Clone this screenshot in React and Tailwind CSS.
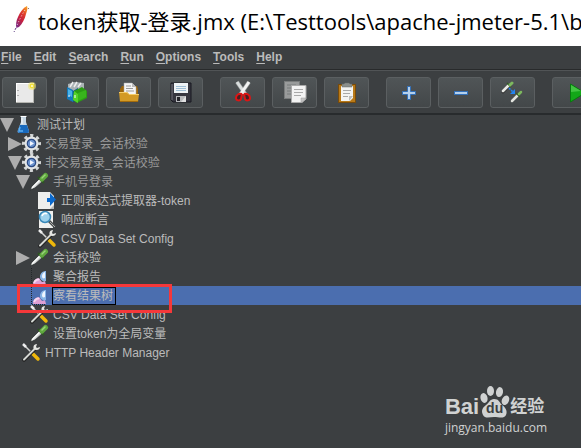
import React, { useState } from 'react';

const menus = ['File', 'Edit', 'Search', 'Run', 'Options', 'Tools', 'Help'];

const Feather = () => (
    <svg width="20" height="30" viewBox="0 0 20 30" aria-hidden="true">
        <defs>
            <linearGradient id="feather" x1="0.8" y1="0" x2="0.2" y2="1">
                <stop offset="0" stopColor="#f69923" />
                <stop offset="0.3" stopColor="#e0402c" />
                <stop offset="0.6" stopColor="#c8203c" />
                <stop offset="1" stopColor="#7b2a84" />
            </linearGradient>
        </defs>
        <path d="M15 2C11 4 8 8 6 13C4 17 4 20 4 24L7 23C10 20 13 15 14 10C15 7 16 4 15 2Z" fill="url(#feather)" />
        <path d="M13 6C9 12 6 19 2 28" fill="none" stroke="#fff" strokeWidth="0.7" strokeDasharray="1.2 2" />
        <path d="M4 24L2 28" stroke="#55317c" strokeWidth="1" strokeDasharray="2 1.5" />
        <circle cx="16.5" cy="4.5" r="0.6" fill="#8a5a5a" />
    </svg>
);

const NewIcon = () => (
    <svg width="24" height="24" viewBox="0 0 24 24" aria-hidden="true">
        <rect x="3.5" y="4.5" width="17" height="19" fill="#e9e9e9" stroke="#fff" />
        <path d="M3 23.5H21M20.5 5V23" stroke="#b5b5b0" />
        <path d="M5 11v1M5 16v1" stroke="#777" />
        <circle cx="19" cy="7" r="4" fill="#f1e879" opacity="0.6" />
        <circle cx="19" cy="7" r="2.4" fill="#f0df38" />
        <circle cx="19" cy="7" r="1" fill="#fffce0" />
    </svg>
);

const TemplatesIcon = () => (
    <svg width="24" height="24" viewBox="0 0 24 24" aria-hidden="true">
        <path d="M3 5L10 3L19 4V13L10 16L3 12Z" fill="#aab2b5" />
        <path d="M5 8L8 3M9 8L12 3M13 8L16 4" stroke="#eceeee" strokeWidth="1.5" />
        <path d="M2 8L8 11V23L2 20Z" fill="#1479bb" />
        <path d="M3 10L7 12V18L3 16Z" fill="#48b2e9" />
        <path d="M8 12L13 9V21L8 23Z" fill="#0c5795" />
        <path d="M9 12L17 8L22 12V19L12 24L8 21Z" fill="#2b9c14" />
        <path d="M9 12L13 15V24L8 21Z" fill="#55d329" />
        <path d="M13 14L21 11V18L13 22Z" fill="#38b51c" />
        <path d="M10 16v3M4 16v2" stroke="#fff" />
    </svg>
);

const OpenIcon = () => (
    <svg width="24" height="24" viewBox="0 0 24 24" aria-hidden="true">
        <path d="M3 10L5 7H20L21 10V22H3Z" fill="#9b650c" />
        <path d="M7 4H15L19 8V17H7Z" fill="#f5f5f5" stroke="#aaa" strokeWidth="0.5" />
        <path d="M15 4V8H19Z" fill="#bbb" />
        <path d="M9 7h5M9 9.5h7M9 12h8" stroke="#999" />
        <path d="M2 13H10L12 15H22L21 23H3Z" fill="#d39a26" />
        <path d="M2 13.5H10L12 15.5H22" fill="none" stroke="#f5cc68" />
        <path d="M3 22.5H21" stroke="#a36b0c" />
    </svg>
);

const SaveIcon = () => (
    <svg width="24" height="24" viewBox="0 0 24 24" aria-hidden="true">
        <path d="M2 4H22V23H4L2 21Z" fill="#363640" stroke="#191920" />
        <path d="M3 5V21" stroke="#777780" />
        <rect x="5" y="4" width="14" height="10" fill="#edf2f5" />
        <path d="M7 7.5H17M7 9.5H17M7 11.5H17" stroke="#9ebed5" />
        <rect x="7" y="17" width="10" height="6" fill="#b7b9bc" />
        <rect x="8" y="18" width="3" height="4" fill="#25252b" />
        <path d="M12 23L17 17V23Z" fill="#e1e1e1" />
    </svg>
);

const CutIcon = () => (
    <svg width="24" height="24" viewBox="0 0 24 24" aria-hidden="true">
        <path d="M6 3L15 16M18 3L9 16" stroke="#8d9292" strokeWidth="4" />
        <path d="M6 3L15 16" stroke="#d9dddd" strokeWidth="3" />
        <path d="M18 3L9 16" stroke="#f2f3f3" strokeWidth="3" />
        <path d="M11 15C8 14 5 16 5 19C5 22 9 22 10 20Z" fill="#472124" stroke="#dc1515" strokeWidth="2" />
        <path d="M13 15C16 14 19 16 19 19C19 22 15 22 14 20Z" fill="#472124" stroke="#dc1515" strokeWidth="2" />
        <circle cx="12" cy="14" r="1" fill="#eee" />
    </svg>
);

const CopyIcon = () => (
    <svg width="24" height="24" viewBox="0 0 24 24" aria-hidden="true">
        <rect x="1.5" y="2.5" width="15" height="17" fill="#999b9b" stroke="#797c7c" />
        <path d="M4 6h9M4 9h5M4 12h5M4 15h5" stroke="#777a7a" />
        <path d="M8.5 6.5H23V20L19 23.5H8.5Z" fill="#f3f3f3" stroke="#aaa" />
        <path d="M23 19H18V23.5Z" fill="#c7c7c7" stroke="#999" strokeWidth="0.5" />
        <path d="M11 10.5h9M11 13.5h9M11 16.5h7" stroke="#aaa" />
    </svg>
);

const PasteIcon = () => (
    <svg width="24" height="24" viewBox="0 0 24 24" aria-hidden="true">
        <rect x="3.5" y="5.5" width="17" height="18" fill="#b87918" stroke="#784b0b" />
        <path d="M6 7H18V19L15 22H6Z" fill="#f4f4f2" />
        <path d="M18 17H14V22Z" fill="#bdbdba" />
        <path d="M8 11.5H16M8 14.5H15M8 17.5H13" stroke="#a9a9a8" />
        <path d="M7 8V5H9L10 4H14L15 5H17V8Z" fill="#8b8f8c" stroke="#686c68" strokeWidth="0.5" />
    </svg>
);

const PlusIcon = () => (
    <svg width="24" height="24" viewBox="0 0 24 24" aria-hidden="true">
        <path d="M10.5 7.5H13.5V12.5H18.5V15.5H13.5V20.5H10.5V15.5H5.5V12.5H10.5Z" fill="#b4d0ed" stroke="#3270b9" />
    </svg>
);

const MinusIcon = () => (
    <svg width="24" height="24" viewBox="0 0 24 24" aria-hidden="true">
        <rect x="5.5" y="12.5" width="13" height="3" fill="#b4d0ed" stroke="#3270b9" />
    </svg>
);

const ToggleIcon = () => (
    <svg width="24" height="24" viewBox="0 0 24 24" aria-hidden="true">
        <path d="M2 13L9 6" stroke="#333" strokeWidth="3" strokeLinecap="round" />
        <path d="M2 12L8 6" stroke="#e8e9e5" strokeWidth="2.5" strokeLinecap="round" />
        <path d="M6 4L10 8" stroke="#335a26" strokeWidth="1.5" />
        <path d="M9 6L11 4" stroke="#7db85f" strokeWidth="3" strokeLinecap="round" />
        <path d="M11 22L17 16" stroke="#e2e3de" strokeWidth="2.5" strokeLinecap="round" />
        <path d="M15 14L19 18" stroke="#335a26" strokeWidth="1.5" />
        <path d="M18 15L20 13" stroke="#7db85f" strokeWidth="2.5" strokeLinecap="round" />
        <path d="M8 9L12 13" stroke="#2384f2" strokeWidth="1.5" strokeDasharray="2 1" />
        <path d="M14 10V15H9Z" fill="#2384f2" />
    </svg>
);

const RunIcon = () => (
    <svg width="24" height="24" viewBox="0 0 24 24" aria-hidden="true">
        <path d="M7.5 5L22 14L7.5 23Z" fill="#13a718" stroke="#08780f" />
        <path d="M8 6L18 12L8 13Z" fill="#42c442" />
    </svg>
);

const toolGroups = [
    [['New', NewIcon], ['Templates', TemplatesIcon], ['Open', OpenIcon], ['Save', SaveIcon]],
    [['Cut', CutIcon], ['Copy', CopyIcon], ['Paste', PasteIcon]],
    [['Expand all', PlusIcon], ['Collapse all', MinusIcon], ['Toggle', ToggleIcon]],
    [['Start', RunIcon]],
];

const nodeArt = {
    flask: (
        <>
            <path d="M7 1H12V7L15 16C15 18 14 18 13 18H5C4 18 3 17 4 15L7 7Z" fill="#c6d6e3" />
            <path d="M6 10H13L15 16C15 18 14 18 12 18H6C4 18 3 17 4 15Z" fill="#1769bd" />
            <path d="M6 12L5 16H9" stroke="#5fb0ef" strokeWidth="1.5" fill="none" />
            <path d="M6.5 1.5H12.5M8 3V9" stroke="#fff" />
        </>
    ),
    gear: (
        <>
            <circle cx="9.5" cy="9.5" r="8" fill="none" stroke="#d5d7d7" strokeWidth="3" strokeDasharray="3.14 3.143" strokeDashoffset="1.57" />
            <circle cx="9.5" cy="9.5" r="5.5" fill="#fff" stroke="#e3e5e5" strokeWidth="3" />
            <circle cx="9.5" cy="9.5" r="4.2" fill="#6d94cf" stroke="#2c4b84" strokeWidth="1.2" />
            <path d="M8 7L12 9.5L8 12Z" fill="#f1f6ff" />
        </>
    ),
    pipette: (
        <>
            <path d="M0 18L2 14L10 6L13 9L5 16Z" fill="#c9cccb" stroke="#24282a" strokeWidth="0.7" />
            <path d="M2 16L10 8" stroke="#fafafa" strokeWidth="1.5" />
            <path d="M8 5L14 11" stroke="#2e5522" strokeWidth="2" />
            <path d="M12 7L15.5 3.5" stroke="#5fa83e" strokeWidth="5" strokeLinecap="round" />
            <path d="M12 6L15 3" stroke="#9bd37c" strokeWidth="1.5" strokeLinecap="round" />
        </>
    ),
    extractor: (
        <>
            <path d="M0 1H12L16 5V18H0Z" fill="#eeeeec" />
            <path d="M12 18L16 14V18Z" fill="#b5b5b5" />
            <path d="M9 7H12V2L18 8.5L12 15V11H9Z" fill="#0c69cc" />
        </>
    ),
    assertion: (
        <>
            <path d="M1 1H15V18H1Z" fill="#f0f0ee" />
            <path d="M11 11L17 17" stroke="#4a4e4e" strokeWidth="3" />
            <path d="M12 12L17 17" stroke="#aaa" />
            <circle cx="7" cy="7" r="5.5" fill="#9ed2ed" stroke="#3988b8" strokeWidth="1.5" />
            <path d="M4 6C5 3 8 3 9 4" stroke="#fff" strokeWidth="1.5" fill="none" />
        </>
    ),
    tools: (
        <>
            <path d="M2 2L9 9" stroke="#d5d7d5" strokeWidth="1.5" />
            <path d="M1 1L4 4" stroke="#eee" strokeWidth="2.5" />
            <path d="M10 10L16 16" stroke="#efb80b" strokeWidth="3.5" strokeLinecap="round" />
            <path d="M2 17L13 6" stroke="#222" strokeWidth="3.5" strokeLinecap="round" />
            <path d="M2 16.5L13 5.5" stroke="#d4d7d3" strokeWidth="2" strokeLinecap="round" />
            <path d="M15 1C11 1 11 5 12 6C14 8 18 7 18 4L15 5L14 4Z" fill="#e4e5e2" />
        </>
    ),
    report: (
        <>
            <path d="M1.5 1V18.5H16" stroke="#24282a" strokeDasharray="1 1" fill="none" />
            <path d="M3 18C3 14 6 11 9 11L12 15L15 14L16 18Z" fill="#dd9fd4" />
            <path d="M4 16C5 13 8 12 9 13" stroke="#f6d7f0" strokeWidth="2" fill="none" />
            <path d="M10 10C10 6 13 4 16 4V14C13 15 10 13 10 10Z" fill="#88b5e7" />
            <path d="M12 9C12 7 14 5 15 5V11C13 12 12 11 12 9Z" fill="#eef6ff" />
        </>
    ),
};

const nodes = [
    { label: '测试计划', icon: 'flask', pad: 'pl-0', arrow: 'open' },
    { label: '交易登录_会话校验', icon: 'gear', pad: 'pl-2', arrow: 'closed', disabled: true },
    { label: '非交易登录_会话校验', icon: 'gear', pad: 'pl-2', arrow: 'open', disabled: true },
    { label: '手机号登录', icon: 'pipette', pad: 'pl-4', arrow: 'open', disabled: true },
    { label: '正则表达式提取器-token', icon: 'extractor', pad: 'pl-6' },
    { label: '响应断言', icon: 'assertion', pad: 'pl-6' },
    { label: 'CSV Data Set Config', icon: 'tools', pad: 'pl-6' },
    { label: '会话校验', icon: 'pipette', pad: 'pl-4', arrow: 'closed' },
    { label: '聚合报告', icon: 'report', pad: 'pl-4' },
    { label: '察看结果树', icon: 'report', pad: 'pl-4', marked: true },
    { label: 'CSV Data Set Config', icon: 'tools', pad: 'pl-4' },
    { label: '设置token为全局变量', icon: 'pipette', pad: 'pl-4' },
    { label: 'HTTP Header Manager', icon: 'tools', pad: 'pl-2' },
];

const TreeRow = ({ node, selected, onSelect }) => (
    <li
        role="treeitem"
        aria-selected={selected}
        onClick={onSelect}
        className={`relative flex items-center h-[19px] ${node.pad} ${selected ? 'bg-[#4b6eaf]' : ''}`}
    >
        {node.arrow ? (
            <button type="button" aria-label={`Toggle ${node.label}`} className="w-[14px] shrink-0">
                <svg width="14" height="14" viewBox="0 0 14 14" className="block">
                    <path d={node.arrow === 'open' ? 'M0 0H14L7 14Z' : 'M0 0L14 7L0 14Z'} fill="#adadad" />
                </svg>
            </button>
        ) : (
            <span className="w-[14px] shrink-0" />
        )}
        <svg width="19" height="19" viewBox="0 0 19 19" className="shrink-0 mr-1" aria-hidden="true">
            {nodeArt[node.icon]}
        </svg>
        <span
            className={`whitespace-nowrap leading-4 ${node.disabled ? 'text-[#999999]' : 'text-[#bbbbbb]'} ${selected ? 'outline outline-black pr-0.5' : ''}`}
        >
            {node.label}
        </span>
        {/* red callout box */}
        {node.marked && (
            <span className="absolute z-10 left-[17px] -top-[2px] w-[155px] h-[29px] border-3 border-[#f5383a] pointer-events-none" />
        )}
    </li>
);

const Watermark = () => (
    <div className="absolute right-[34px] bottom-[11px] text-[#d0d2d2] pointer-events-none">
        <div className="flex items-end h-[34px]">
            <span className="font-bold text-[22px] leading-6">Bai</span>
            <span className="relative w-[31px] h-[34px] shrink-0">
                <svg width="31" height="34" viewBox="0 0 31 34" fill="currentColor" aria-hidden="true">
                    <ellipse cx="5" cy="13" rx="3.5" ry="5" transform="rotate(-15 5 13)" />
                    <ellipse cx="11.5" cy="6" rx="3.5" ry="5" />
                    <ellipse cx="20.5" cy="7" rx="3.5" ry="5" transform="rotate(10 20 7)" />
                    <ellipse cx="26.5" cy="15" rx="3.5" ry="5" transform="rotate(25 26 15)" />
                    <path d="M15 14C11 14 10 18 7 20C3 23 2 26 4 30C6 34 11 32 15 32C20 32 25 34 27 30C29 26 26 22 23 20C20 17 20 14 15 14Z" />
                </svg>
                <span className="absolute inset-x-0 bottom-[3px] text-center text-[14px] leading-4 font-bold text-[#3c3f41]">du</span>
            </span>
            <span className="font-bold text-[17px] leading-6">经验</span>
        </div>
        <div className="font-['Open_Sans',sans-serif] text-[12px] leading-[18px]">jingyan.baidu.com</div>
    </div>
);

const App = () => {
    const [selected, setSelected] = useState(9);

    return (
        <div className="relative min-h-screen overflow-hidden bg-[#3c3f41] text-[12px] text-[#bbbbbb] font-['Liberation_Sans','Noto_Sans_CJK_SC',sans-serif]">
            {/* Title bar */}
            <header className="flex items-center h-[46px] pl-3 gap-1.5 bg-white text-black">
                <span className="w-5 shrink-0 -mt-2"><Feather /></span>
                <h1 className="whitespace-nowrap -mt-1 text-[22px] leading-7 font-['Open_Sans','Noto_Sans_CJK_SC',sans-serif]">
                    {'token获取-登录.jmx (E:\\Testtools\\apache-jmeter-5.1\\b'}
                </h1>
            </header>

            {/* Menu bar */}
            <nav className="flex gap-3 h-6 pl-px pt-[3px] border-b border-[#282a2b] font-bold">
                {menus.map((m) => (
                    <button key={m} type="button" className="h-4 leading-4">
                        <span className="underline underline-offset-2">{m[0]}</span>{m.slice(1)}
                    </button>
                ))}
            </nav>

            {/* Toolbar */}
            <div className="flex gap-[17px] h-[45px] pl-0.5 pt-[6px] border-t border-[#515456] border-b-2 border-b-[#282b2d]">
                {toolGroups.map((group, i) => (
                    <div key={i} className="flex gap-[7px]">
                        {group.map(([name, Icon]) => (
                            <button
                                key={name}
                                type="button"
                                aria-label={name}
                                className="flex items-center justify-center shrink-0 w-[45px] h-[31px] pb-[3px] rounded-[3px] border border-[#5b5f61] bg-linear-to-b from-[#505557] to-[#434749]"
                            >
                                <Icon />
                            </button>
                        ))}
                    </div>
                ))}
            </div>

            {/* Test plan tree */}
            <ul role="tree">
                {nodes.map((node, i) => (
                    <TreeRow key={i} node={node} selected={selected === i} onSelect={() => setSelected(i)} />
                ))}
            </ul>

            <Watermark />
        </div>
    );
};

export default App;
